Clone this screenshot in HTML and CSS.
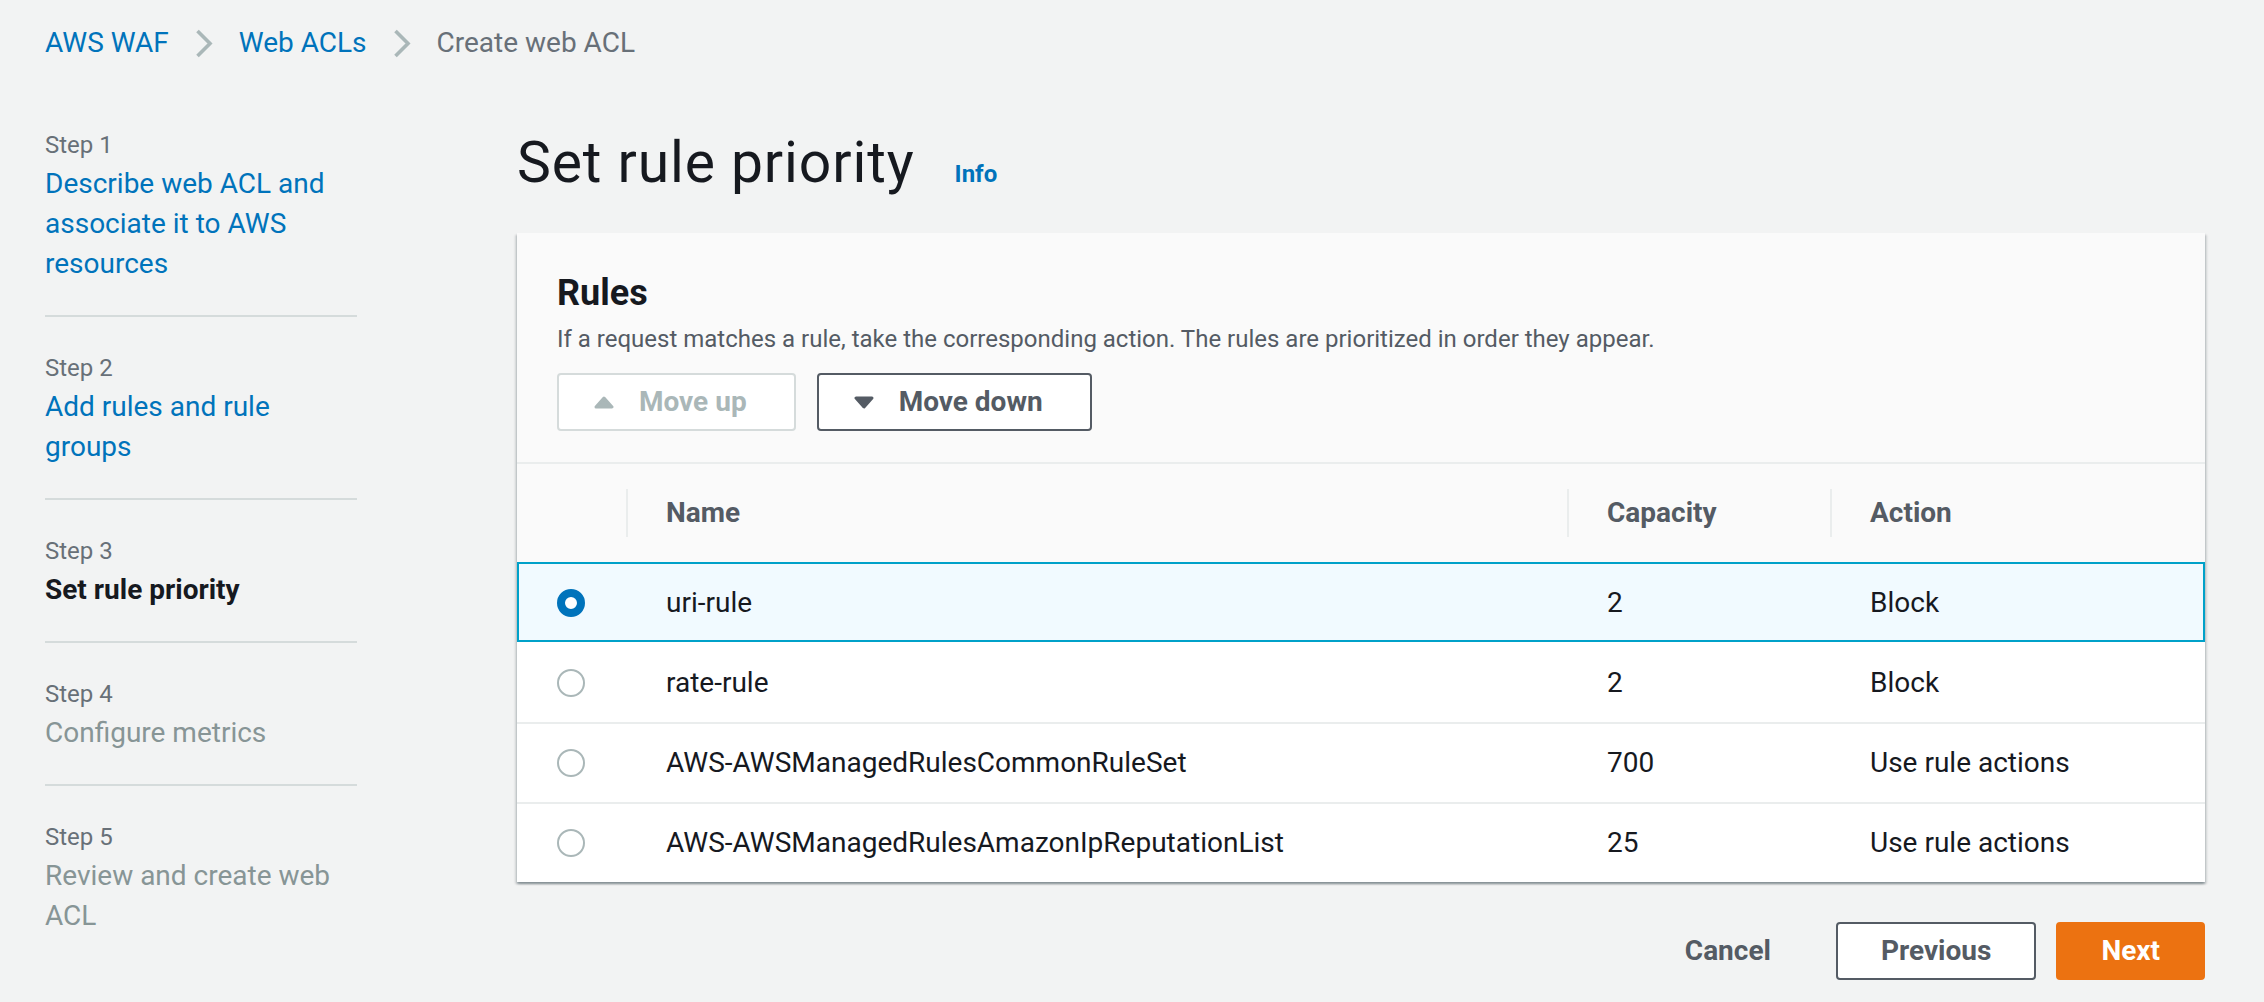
FILE: index.html
```html
<!DOCTYPE html>
<html lang="en">
<head>
<meta charset="utf-8">
<title>Create web ACL - Set rule priority</title>
<link rel="stylesheet" href="styles.css">
</head>
<body>
<div class="page">
  <nav class="breadcrumb">
    <a class="crumb-link" href="#">AWS WAF</a>
    <svg class="chev" width="18" height="29" viewBox="0 0 18 29"><polyline points="2.5,2 15,14.5 2.5,27" fill="none" stroke="#aab7b8" stroke-width="3.6"/></svg>
    <a class="crumb-link" href="#">Web ACLs</a>
    <svg class="chev" width="18" height="29" viewBox="0 0 18 29"><polyline points="2.5,2 15,14.5 2.5,27" fill="none" stroke="#aab7b8" stroke-width="3.6"/></svg>
    <span class="crumb-current">Create web ACL</span>
  </nav>

  <div class="layout">
    <aside class="steps">
      <div class="step">
        <div class="step-label">Step 1</div>
        <a class="step-title link" href="#">Describe web ACL and associate it to AWS resources</a>
      </div>
      <div class="step">
        <div class="step-label">Step 2</div>
        <a class="step-title link" href="#">Add rules and rule groups</a>
      </div>
      <div class="step">
        <div class="step-label">Step 3</div>
        <div class="step-title active">Set rule priority</div>
      </div>
      <div class="step">
        <div class="step-label">Step 4</div>
        <div class="step-title disabled">Configure metrics</div>
      </div>
      <div class="step">
        <div class="step-label">Step 5</div>
        <div class="step-title disabled">Review and create web ACL</div>
      </div>
    </aside>

    <main class="content">
      <div class="title-row">
        <h1 class="page-title">Set rule priority</h1>
        <a class="info" href="#">Info</a>
      </div>

      <section class="panel">
        <div class="panel-header">
          <h2 class="panel-title">Rules</h2>
          <p class="panel-desc">If a request matches a rule, take the corresponding action. The rules are prioritized in order they appear.</p>
          <div class="panel-actions">
            <button class="btn btn-disabled" type="button">
              <svg class="tri" width="20" height="13" viewBox="0 0 20 13"><polygon points="10,2 18,11 2,11" fill="#aab7b8" stroke="#aab7b8" stroke-width="3" stroke-linejoin="round"/></svg>
              <span>Move up</span>
            </button>
            <button class="btn" type="button">
              <svg class="tri" width="20" height="13" viewBox="0 0 20 13"><polygon points="2,2 18,2 10,11" fill="#545b64" stroke="#545b64" stroke-width="3" stroke-linejoin="round"/></svg>
              <span>Move down</span>
            </button>
          </div>
        </div>

        <div class="table">
          <div class="thead cols">
            <div class="th-first"></div>
            <div class="th"><span class="th-inner">Name</span></div>
            <div class="th"><span class="th-inner">Capacity</span></div>
            <div class="th"><span class="th-inner">Action</span></div>
          </div>
          <div class="trow cols selected">
            <div class="td td-radio"><span class="radio radio-on"></span></div>
            <div class="td">uri-rule</div>
            <div class="td">2</div>
            <div class="td">Block</div>
          </div>
          <div class="trow cols">
            <div class="td td-radio"><span class="radio"></span></div>
            <div class="td">rate-rule</div>
            <div class="td">2</div>
            <div class="td">Block</div>
          </div>
          <div class="trow cols">
            <div class="td td-radio"><span class="radio"></span></div>
            <div class="td">AWS-AWSManagedRulesCommonRuleSet</div>
            <div class="td">700</div>
            <div class="td">Use rule actions</div>
          </div>
          <div class="trow cols">
            <div class="td td-radio"><span class="radio"></span></div>
            <div class="td">AWS-AWSManagedRulesAmazonIpReputationList</div>
            <div class="td">25</div>
            <div class="td">Use rule actions</div>
          </div>
        </div>
      </section>

      <div class="footer">
        <button class="fbtn fbtn-link" type="button">Cancel</button>
        <button class="fbtn fbtn-normal" type="button">Previous</button>
        <button class="fbtn fbtn-primary" type="button">Next</button>
      </div>
    </main>
  </div>
</div>
</body>
</html>
```

FILE: styles.css
```css
* {
  box-sizing: border-box;
}

html, body {
  margin: 0;
  padding: 0;
}

body {
  background: #f2f3f3;
  font-family: Roboto, "Liberation Sans", sans-serif;
  color: #16191f;
  font-size: 28px;
  line-height: 40px;
}

a {
  text-decoration: none;
}

.page {
  padding: 23px 59px 0 45px;
}

/* Breadcrumb */
.breadcrumb {
  display: flex;
  align-items: center;
  gap: 26px;
  height: 40px;
}

.crumb-link {
  color: #0073bb;
}

.crumb-current {
  color: #687078;
}

.chev {
  display: block;
}

/* Layout */
.layout {
  display: flex;
  gap: 160px;
  margin-top: 64px;
}

/* Steps navigation */
.steps {
  width: 312px;
  flex: none;
  padding-top: 2px;
}

.step {
  padding: 35px 0 31px;
  border-bottom: 2px solid #d5dbdb;
}

.step:first-child {
  padding-top: 0;
}

.step:last-child {
  border-bottom: none;
}

.step-label {
  font-size: 24px;
  line-height: 32px;
  color: #687078;
  margin-bottom: 3px;
}

.step-title {
  display: block;
  font-size: 28px;
  line-height: 40px;
}

.step-title.link {
  color: #0073bb;
}

.step-title.active {
  font-weight: 700;
  color: #16191f;
}

.step-title.disabled {
  color: #879596;
}

/* Main content */
.content {
  flex: 1;
  min-width: 0;
}

.title-row {
  display: flex;
  align-items: baseline;
  gap: 40px;
  height: 72px;
}

.page-title {
  margin: 0;
  font-size: 57px;
  line-height: 72px;
  font-weight: 400;
  letter-spacing: 0.9px;
  color: #16191f;
}

.info {
  font-size: 24px;
  line-height: 32px;
  font-weight: 700;
  color: #0073bb;
}

/* Panel */
.panel {
  margin-top: 34px;
  background: #ffffff;
  box-shadow: 0 2px 2px 0 rgba(0, 28, 36, 0.3), 2px 2px 2px 0 rgba(0, 28, 36, 0.12), -2px 2px 2px 0 rgba(0, 28, 36, 0.12);
}

.panel-header {
  background: #fafafa;
  padding: 38px 40px 31px;
  border-bottom: 2px solid #eaeded;
}

.panel-title {
  margin: 0;
  font-size: 36px;
  line-height: 44px;
  font-weight: 700;
  color: #16191f;
}

.panel-desc {
  margin: 8px 0 0;
  font-size: 24px;
  line-height: 32px;
  color: #545b64;
}

.panel-actions {
  display: flex;
  gap: 21px;
  margin-top: 18px;
}

.btn {
  display: inline-flex;
  align-items: center;
  gap: 25px;
  height: 58px;
  padding: 7px 47px 7px 35px;
  border: 2px solid #545b64;
  border-radius: 4px;
  background: #ffffff;
  color: #545b64;
  font-family: Roboto, "Liberation Sans", sans-serif;
  font-size: 28px;
  line-height: 40px;
  font-weight: 700;
}

.btn-disabled {
  border-color: #d5dbdb;
  color: #aab7b8;
}

.tri {
  display: block;
  flex: none;
}

/* Table */
.cols {
  display: grid;
  grid-template-columns: 109px 941px 263px 1fr;
}

.thead {
  height: 98px;
  background: #fafafa;
  align-items: center;
}

.th {
  display: flex;
  align-items: center;
}

.th-inner {
  display: flex;
  align-items: center;
  width: 100%;
  height: 48px;
  border-left: 2px solid #eaeded;
  padding-left: 38px;
  font-weight: 700;
  color: #545b64;
}

.trow {
  height: 80px;
  align-items: center;
  background: #ffffff;
  border-top: 2px solid #eaeded;
}

.trow.selected {
  background: #f1faff;
  border-top-color: #00a1c9;
  box-shadow: inset 2px 0 0 #00a1c9, inset -2px 0 0 #00a1c9, inset 0 -2px 0 #00a1c9;
}

.trow.selected + .trow {
  border-top-color: #ffffff;
}

.td {
  padding-left: 40px;
  color: #16191f;
  white-space: nowrap;
}

.td-radio {
  display: flex;
  align-items: center;
}

.radio {
  display: block;
  width: 28px;
  height: 28px;
  border-radius: 50%;
  border: 2px solid #aab7b8;
  background: #ffffff;
}

.radio-on {
  border: 8px solid #0073bb;
}

/* Footer */
.footer {
  display: flex;
  justify-content: flex-end;
  gap: 20px;
  margin-top: 40px;
}

.fbtn {
  height: 58px;
  padding: 7px 43px;
  border: 2px solid transparent;
  border-radius: 4px;
  font-family: Roboto, "Liberation Sans", sans-serif;
  font-size: 28px;
  line-height: 40px;
  font-weight: 700;
  background: transparent;
  color: #545b64;
}

.fbtn-normal {
  background: #ffffff;
  border-color: #545b64;
}

.fbtn-primary {
  background: #ec7211;
  border-color: #ec7211;
  color: #ffffff;
}
```
